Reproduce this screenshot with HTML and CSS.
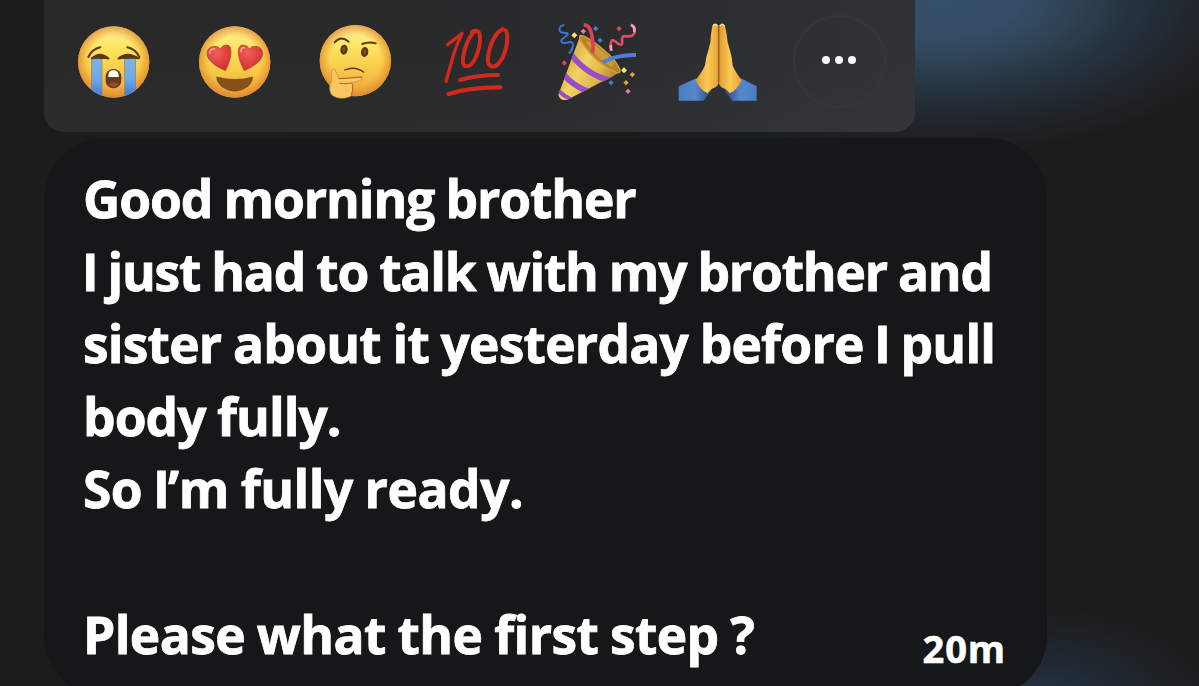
FILE: index.html
```
<!DOCTYPE html>
<html lang="en">
<head>
  <meta charset="UTF-8">
  <meta name="viewport" content="width=device-width, initial-scale=1.0">
  <title>Message</title>
  <link rel="stylesheet" href="styles.css">
</head>
<body>
  <svg class="defs" width="0" height="0" aria-hidden="true">
    <defs>
      <linearGradient id="face" x1="0" y1="0" x2="0" y2="1">
        <stop offset="0" stop-color="#fff0a0"/>
        <stop offset="0.3" stop-color="#fde561"/>
        <stop offset="0.65" stop-color="#f7c846"/>
        <stop offset="1" stop-color="#ec9f3d"/>
      </linearGradient>
      <radialGradient id="rim">
        <stop offset="0.7" stop-color="#e8912c" stop-opacity="0"/>
        <stop offset="1" stop-color="#dd842b" stop-opacity="0.75"/>
      </radialGradient>
      <linearGradient id="tear" x1="0" y1="0" x2="0" y2="1">
        <stop offset="0" stop-color="#82b3dd"/>
        <stop offset="0.5" stop-color="#6ca8ea"/>
        <stop offset="1" stop-color="#3474d2"/>
      </linearGradient>
      <radialGradient id="heart" cx="0.4" cy="0.3" r="0.7">
        <stop offset="0" stop-color="#ee625b"/>
        <stop offset="1" stop-color="#d42d30"/>
      </radialGradient>
      <linearGradient id="cone" x1="0" y1="0.2" x2="1" y2="0.8">
        <stop offset="0" stop-color="#c98e25"/>
        <stop offset="0.4" stop-color="#f0d463"/>
        <stop offset="0.65" stop-color="#dfb948"/>
        <stop offset="1" stop-color="#8f6322"/>
      </linearGradient>
      <linearGradient id="hand" x1="0" y1="0" x2="1" y2="0">
        <stop offset="0" stop-color="#dd9a2e"/>
        <stop offset="0.5" stop-color="#fbcb55"/>
        <stop offset="1" stop-color="#e9a134"/>
      </linearGradient>
      <linearGradient id="sleeveL" x1="0" y1="0" x2="1" y2="0">
        <stop offset="0" stop-color="#4a7cc2"/>
        <stop offset="0.5" stop-color="#5688cf"/>
        <stop offset="1" stop-color="#2c4676"/>
      </linearGradient>
      <linearGradient id="sleeveR" x1="1" y1="0" x2="0" y2="0">
        <stop offset="0" stop-color="#4a7cc2"/>
        <stop offset="0.5" stop-color="#5688cf"/>
        <stop offset="1" stop-color="#2c4676"/>
      </linearGradient>
      <clipPath id="cryClip"><circle cx="161" cy="156" r="107"/></clipPath>
      <clipPath id="coneClip"><path d="M121 76 L240 184 Q215 205 180 218 L82 269 Q60 275 55 254 Z"/></clipPath>
    </defs>
  </svg>

  <main class="screen">
    <div class="reactions">
      <button class="reaction" aria-label="Crying">
        <svg viewBox="42 15 240 270">
          <circle cx="161" cy="156" r="107" fill="url(#face)"/>
          <circle cx="161" cy="156" r="107" fill="url(#rim)"/>
          <g clip-path="url(#cryClip)">
            <rect x="94" y="144" width="32" height="125" fill="url(#tear)" stroke="#9a8145" stroke-width="2"/>
            <rect x="194" y="144" width="33" height="125" fill="url(#tear)" stroke="#9a8145" stroke-width="2"/>
          </g>
          <path d="M85 141 Q97 117 121 112" class="brow"/>
          <path d="M202 112 Q226 117 238 141" class="brow"/>
          <path d="M92 145 Q119 118 149 145 Q147 151 138 147 L102 146 Q95 150 92 145Z" fill="#5b3712"/>
          <path d="M172 145 Q201 118 240 145 Q239 150 225 146 L184 147 Q174 151 172 145Z" fill="#5b3712"/>
          <rect x="137" y="177" width="47" height="58" rx="23" fill="#693b15"/>
          <path d="M145 201 V194 Q147 181 160 181 Q174 181 176 194 V201Z" fill="#fff"/>
          <path d="M145 223 Q160 210 177 223 Q161 239 145 223Z" fill="#934b30"/>
        </svg>
      </button>

      <button class="reaction" aria-label="Heart eyes">
        <svg viewBox="405 15 240 270">
          <circle cx="524" cy="156" r="107" fill="url(#face)"/>
          <circle cx="524" cy="156" r="107" fill="url(#rim)"/>
          <path d="M496 182 Q445 159 441 134 Q440 112 461 109 Q474 107 481 117 Q487 105 500 105 Q514 106 513 128 Q512 151 496 182Z" fill="url(#heart)" stroke="#b93a28" stroke-width="2"/>
          <path d="M553 182 Q536 151 535 128 Q534 106 549 105 Q561 105 568 117 Q575 107 588 109 Q609 112 608 134 Q604 159 553 182Z" fill="url(#heart)" stroke="#b93a28" stroke-width="2"/>
          <path d="M449 129 Q450 117 464 116" class="shine"/>
          <path d="M543 125 Q542 112 553 113" class="shine"/>
          <path d="M470 201 Q524 216 578 201 Q578 215 564 229 Q524 258 484 229 Q470 215 470 201Z" fill="#855116" stroke="#6e4315" stroke-width="2"/>
        </svg>
      </button>

      <button class="reaction" aria-label="Thinking">
        <svg viewBox="48 15 240 270">
          <circle cx="166" cy="152" r="107" fill="url(#face)"/>
          <circle cx="166" cy="152" r="107" fill="url(#rim)"/>
          <path d="M104 97 Q122 75 146 95" class="brow"/>
          <path d="M187 102 Q207 94 227 100" class="brow"/>
          <ellipse cx="132" cy="119" rx="11" ry="15" fill="#5b3917" transform="rotate(7 132 119)"/>
          <ellipse cx="194" cy="126" rx="11" ry="15" fill="#5b3917" transform="rotate(7 194 126)"/>
          <ellipse cx="132" cy="118" rx="4" ry="8" fill="#7a552a"/>
          <ellipse cx="194" cy="125" rx="4" ry="8" fill="#7a552a"/>
          <path d="M134 180 Q164 167 191 186" fill="none" stroke="#5c3913" stroke-width="4" stroke-linecap="round"/>
          <path d="M95 181 Q99 172 105 180 Q113 194 116 205 Q141 203 176 200 Q188 201 187 207 Q180 213 154 219 Q164 224 158 233 Q163 240 156 247 Q157 257 149 260 Q123 270 101 259 Q88 251 89 230 Q90 221 96 211 Q92 196 95 181Z" fill="#f9c761" stroke="#c98836" stroke-width="2"/>
          <path d="M117 206 Q150 205 186 201 M119 220 Q141 223 154 219 M157 223 Q160 240 155 255" fill="none" stroke="#a9691f" stroke-width="3" stroke-linecap="round"/>
        </svg>
      </button>

      <button class="reaction" aria-label="One hundred">
        <svg viewBox="411 15 240 270">
          <g class="hundred">
            <path d="M443 104 Q467 86 486 70 Q463 119 454 158 Q445 189 438 214" stroke-width="10"/>
            <path d="M524 64 Q506 80 494 119 Q483 161 495 168 Q511 174 526 145 Q542 110 540 79 Q538 55 515 66" stroke-width="12"/>
            <path d="M608 57 Q582 72 570 113 Q557 158 570 167 Q589 178 608 143 Q622 111 622 82 Q622 65 616 61" stroke-width="12"/>
            <path d="M480 210 Q531 195 594 195" stroke-width="12"/>
            <path d="M446 252 Q507 231 601 232" stroke-width="13"/>
          </g>
        </svg>
      </button>

      <button class="reaction" aria-label="Party popper">
        <svg viewBox="54 15 240 270">
          <path d="M121 76 L240 184 Q215 205 180 218 L82 269 Q60 275 55 254 Z" fill="url(#cone)"/>
          <g clip-path="url(#coneClip)" fill="none" stroke="#9a4ccb" stroke-width="17">
            <path d="M94 134 Q141 195 213 212"/>
            <path d="M70 192 Q94 225 148 246"/>
            <path d="M52 238 Q66 255 93 268" stroke-width="12"/>
          </g>
          <path d="M121 76 Q114 83 128 102 Q170 162 227 187 Q242 192 240 179 Q229 150 188 117 Q140 76 121 76Z" fill="#b98325" stroke="#d5a33d" stroke-width="4"/>
          <path d="M137 92 Q161 96 219 151 Q226 167 211 169 Q163 141 137 92Z" fill="#cb9a39"/>
          <g fill="none" stroke-linecap="butt">
            <path d="M131 44 Q151 45 156 78 Q161 110 158 128" stroke="#db4058" stroke-width="11"/>
            <path d="M189 157 Q229 134 288 135" stroke="#4d7fe0" stroke-width="12"/>
            <path d="M213 123 Q210 95 216 91 Q223 89 234 101 Q250 110 246 91 Q245 76 259 79 Q284 81 284 64 Q285 49 272 44" stroke="#dc4c6b" stroke-width="8"/>
            <path d="M214 122 L212 105 M283 67 Q286 49 273 45" stroke="#efa1b5" stroke-width="8"/>
            <path d="M73 44 Q55 49 59 62 Q62 70 79 69 Q89 70 75 81 Q59 91 66 97 Q74 101 90 96 Q102 95 98 111 Q96 124 86 130" stroke="#3f72d4" stroke-width="6"/>
          </g>
          <g fill="#ee7b9d">
            <path d="M130 56l8 8-8 8-8-8zM264 236l8 8-8 8-8-8z"/>
            <path d="M237 48l8 8-8 8-8-8zM73 151l8 8-8 8-8-8z" fill="#d94463"/>
            <path d="M167 48l8 8-8 8-8-8zM180 83l8 8-8 8-8-8zM213 210l8 8-8 8-8-8z" fill="#4380d4"/>
            <path d="M103 67l9 9-9 9-9-9zM252 172l9 9-9 9-9-9z" fill="#fae76a"/>
            <path d="M277 186l8 8-8 8-8-8zM258 210l8 8-8 8-8-8z" fill="#e9a43a"/>
          </g>
        </svg>
      </button>

      <button class="reaction" aria-label="Folded hands">
        <svg viewBox="417 15 240 270">
          <path d="M416 229 L469 205 Q474 235 515 240 L491 272 H416Z" fill="url(#sleeveL)"/>
          <path d="M650 229 L602 205 Q591 235 553 240 L577 272 H650Z" fill="url(#sleeveR)"/>
          <path d="M517 48 Q520 38 530 41 L536 47 V218 Q533 231 516 236 Q509 241 503 250 Q478 239 467 210 Q487 186 495 166 Q498 139 506 118 Q513 96 513 73Z" fill="url(#hand)"/>
          <path d="M555 48 Q552 38 543 41 L536 47 V218 Q539 231 554 236 Q563 241 569 250 Q594 239 605 210 Q585 186 578 166 Q576 139 569 118 Q561 96 560 73Z" fill="url(#hand)"/>
          <path d="M536 48 V217" stroke="#9b6120" stroke-width="5"/>
          <path d="M519 48 Q525 38 531 48 M541 48 Q547 38 553 48" fill="none" stroke="#ffe0a0" stroke-width="4"/>
        </svg>
      </button>

      <button class="more" aria-label="More reactions">
        <span class="dot"></span><span class="dot"></span><span class="dot"></span>
      </button>
    </div>

    <div class="bubble">
      <div class="message">
        <div class="line l1">Good morning brother</div>
        <div class="line l2"><span class="cap-i">I</span> just had to talk with my brother and</div>
        <div class="line l3">sister about it yesterday before <span class="cap-i">I</span> pull</div>
        <div class="line l4">body fully.</div>
        <div class="line l5">So <span class="cap-i">I</span>’m fully ready.</div>
        <div class="line">&nbsp;</div>
        <div class="line l7">Please what the first step ?</div>
      </div>
      <time class="time">20m</time>
    </div>
  </main>
</body>
</html>
```

FILE: styles.css
```
* {
  box-sizing: border-box;
}
body {
  margin: 0;
  overflow: hidden;
  background: #1c1c1c;
  color: #fff;
  font-family: "Open Sans", "Noto Sans", sans-serif;
}
.defs {
  display: block;
}
.screen {
  height: 686px;
  padding-left: 44px;
  overflow: hidden;
  background:
    radial-gradient(ellipse 330px 155px at 940px 0, #364f69 0%, #344c64 25%, #2d4152 42%, #26333f 58%, #21272e 75%, rgba(28,28,28,0) 100%),
    radial-gradient(ellipse 180px 100px at 1040px 705px, #263648 0%, #202831 45%, rgba(28,28,28,0) 100%),
    #1c1c1c;
}

/* reaction bar */
.reactions {
  display: flex;
  align-items: flex-start;
  gap: 41px;
  width: 871px;
  height: 132px;
  padding: 15px 0 0 30px;
  border-radius: 0 0 20px 20px;
  background:
    linear-gradient(to bottom, transparent 40%, rgba(255,255,255,0.015)),
    linear-gradient(to right, #292929 0%, #292a2b 55%, #2d3034 85%, #2f3338 100%);
}
.reaction {
  width: 80px;
  height: 90px;
  padding: 0;
  border: none;
  background: none;
  flex: none;
}
.reaction svg {
  display: block;
  width: 80px;
  height: 90px;
  overflow: visible;
}
.brow {
  fill: none;
  stroke: #5b3712;
  stroke-width: 6;
  stroke-linecap: round;
}
.shine {
  fill: none;
  stroke: #f8a59c;
  stroke-width: 5;
  stroke-linecap: round;
}
.hundred {
  fill: none;
  stroke: #d3291d;
  stroke-linecap: round;
  stroke-linejoin: round;
}
.more {
  display: flex;
  align-items: center;
  justify-content: center;
  gap: 5px;
  flex: none;
  width: 93px;
  height: 93px;
  margin-left: -7px;
  padding: 0 2px 3px 0;
  border: 2px solid #34363a;
  border-radius: 50%;
  background: none;
}
.dot {
  width: 8px;
  height: 8px;
  border-radius: 50%;
  background: #f7f8fc;
}

/* message bubble */
.bubble {
  display: flex;
  justify-content: space-between;
  align-items: flex-end;
  width: 1003px;
  height: 558px;
  margin-top: 6px;
  padding: 24px 41px 26px 39px;
  border-radius: 60px;
  background: #161719;
}
.message {
  align-self: flex-start;
  width: 0;
}
.line {
  height: 72.6px;
  font-size: 51.5px;
  font-weight: 700;
  line-height: 72.6px;
  white-space: nowrap;
  word-spacing: -1px;
  -webkit-text-stroke: 0.8px #fff;
}
.cap-i {
  font-family: Inter, sans-serif;
  line-height: 1;
}
.l1 { letter-spacing: -1.1px; }
.l2 { letter-spacing: -1.22px; }
.l3 { letter-spacing: -0.78px; }
.l4 { letter-spacing: -0.95px; }
.l5 { letter-spacing: -0.5px; }
.l7 { letter-spacing: -0.6px; }
.time {
  font-size: 38px;
  font-weight: 700;
  line-height: 44px;
  letter-spacing: 0.9px;
  -webkit-text-stroke: 0.6px #fff;
}
```
